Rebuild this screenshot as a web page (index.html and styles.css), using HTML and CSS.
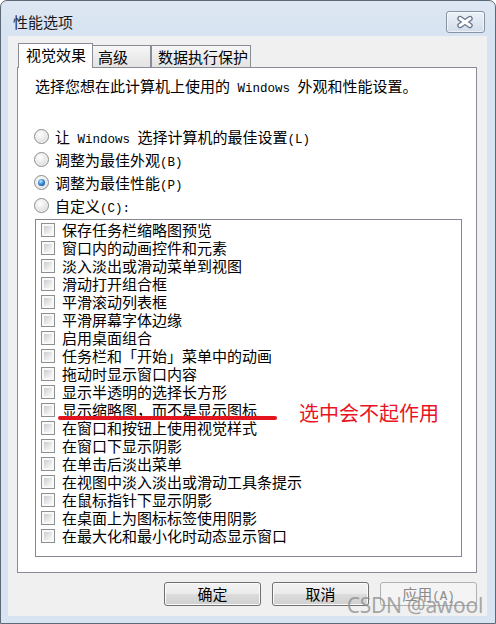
FILE: index.html
```html
<!DOCTYPE html>
<html lang="zh-CN">
<head>
<meta charset="utf-8">
<title>性能选项</title>
<link rel="stylesheet" href="styles.css">
</head>
<body>
<div class="window">
  <div class="titlebar">
    <div class="title">性能选项</div>
    <div class="close">
      <svg width="37" height="20" viewBox="0 0 37 20">
        <path d="M13 6.5 L23 13.5 M23 6.5 L13 13.5" stroke="#66738a" stroke-width="5.4" stroke-linecap="round" fill="none"/>
        <path d="M13 6.5 L23 13.5 M23 6.5 L13 13.5" stroke="#ffffff" stroke-width="3" stroke-linecap="round" fill="none"/>
      </svg>
    </div>
  </div>
  <div class="client">
    <div class="tabs">
      <div class="tab active">视觉效果</div>
      <div class="tab t2">高级</div>
      <div class="tab t3">数据执行保护</div>
    </div>
    <div class="panel">
      <p class="desc">选择您想在此计算机上使用的<span class="en"> Windows </span>外观和性能设置。</p>
      <div class="options">
        <div class="radio-row"><span class="radio"></span><span class="label">让<span class="en"> Windows </span>选择计算机的最佳设置<span class="en">(L)</span></span></div>
        <div class="radio-row"><span class="radio"></span><span class="label">调整为最佳外观<span class="en">(B)</span></span></div>
        <div class="radio-row"><span class="radio checked"></span><span class="label">调整为最佳性能<span class="en">(P)</span></span></div>
        <div class="radio-row"><span class="radio"></span><span class="label">自定义<span class="en">(C):</span></span></div>
      </div>
      <div class="listbox">
        <div class="item"><span class="check"></span><span>保存任务栏缩略图预览</span></div>
        <div class="item"><span class="check"></span><span>窗口内的动画控件和元素</span></div>
        <div class="item"><span class="check"></span><span>淡入淡出或滑动菜单到视图</span></div>
        <div class="item"><span class="check"></span><span>滑动打开组合框</span></div>
        <div class="item"><span class="check"></span><span>平滑滚动列表框</span></div>
        <div class="item"><span class="check"></span><span>平滑屏幕字体边缘</span></div>
        <div class="item"><span class="check"></span><span>启用桌面组合</span></div>
        <div class="item"><span class="check"></span><span>任务栏和「开始」菜单中的动画</span></div>
        <div class="item"><span class="check"></span><span>拖动时显示窗口内容</span></div>
        <div class="item"><span class="check"></span><span>显示半透明的选择长方形</span></div>
        <div class="item"><span class="check"></span><span>显示缩略图，而不是显示图标</span></div>
        <div class="item"><span class="check"></span><span>在窗口和按钮上使用视觉样式</span></div>
        <div class="item"><span class="check"></span><span>在窗口下显示阴影</span></div>
        <div class="item"><span class="check"></span><span>在单击后淡出菜单</span></div>
        <div class="item"><span class="check"></span><span>在视图中淡入淡出或滑动工具条提示</span></div>
        <div class="item"><span class="check"></span><span>在鼠标指针下显示阴影</span></div>
        <div class="item"><span class="check"></span><span>在桌面上为图标标签使用阴影</span></div>
        <div class="item"><span class="check"></span><span>在最大化和最小化时动态显示窗口</span></div>
      </div>
    </div>
    <div class="actions">
      <div class="btn">确定</div>
      <div class="btn">取消</div>
      <div class="btn disabled">应用<span class="en">(A)</span></div>
    </div>
  </div>
  <div class="annot-line"></div>
  <div class="annot-text">选中会不起作用</div>
  <div class="watermark">CSDN @awool</div>
</div>
</body>
</html>
```

FILE: styles.css
```css
html, body {
  margin: 0;
  padding: 0;
  background: #ffffff;
}
body {
  width: 496px;
  height: 624px;
  overflow: hidden;
  font-family: "Noto Sans CJK SC", sans-serif;
  color: #000;
}
.window {
  position: relative;
  box-sizing: border-box;
  width: 496px;
  height: 624px;
  border: 1px solid #5e6977;
  border-radius: 7px 7px 0 0;
  background: linear-gradient(#dde7f3, #d7e3f1 36px, #d8e4f2);
  padding: 0 8px 7px 7px;
  display: flex;
  flex-direction: column;
}
.titlebar {
  height: 35px;
  flex: none;
  display: flex;
  justify-content: space-between;
  align-items: flex-start;
}
.title {
  margin: 12px 0 0 5px;
  font-size: 15px;
  line-height: 18px;
  color: #1a1a1a;
}
.close {
  box-sizing: border-box;
  width: 39px;
  height: 22px;
  margin: 10px 2px 0 0;
  border: 1px solid #8792a3;
  border-radius: 3px;
  background: linear-gradient(#edf2f8, #dfe7f1 50%, #d3ddea);
  box-shadow: inset 0 0 0 1px rgba(255,255,255,0.6);
}
.close svg {
  display: block;
}
.client {
  flex: 1;
  background: #f0f0f0;
  padding: 7px 10px 10px 9px;
  display: flex;
  flex-direction: column;
}
.tabs {
  position: relative;
  z-index: 1;
  display: flex;
  align-items: flex-end;
  height: 25px;
  margin-bottom: -1px;
  padding-left: 1px;
}
.tab {
  box-sizing: border-box;
  height: 23px;
  border: 1px solid #898c95;
  background: linear-gradient(#f7f7f7, #ececec 50%, #e3e3e3);
  font-size: 15px;
  line-height: 21px;
  padding: 0 0 0 6px;
  white-space: nowrap;
}
.tab.active {
  width: 75px;
  height: 25px;
  padding-left: 7px;
  background: #ffffff;
  border-bottom: none;
  line-height: 22px;
}
.tab.t2 {
  width: 58px;
  border-left: none;
  padding-left: 5px;
}
.tab.t3 {
  width: 100px;
}
.panel {
  box-sizing: border-box;
  height: 506px;
  border: 1px solid #898c95;
  background: #ffffff;
  padding: 9px 15px 0 16px;
}
.desc {
  height: 18px;
  margin: 0 0 0 1px;
  font-size: 15px;
  line-height: 18px;
  white-space: nowrap;
}
.en {
  font-family: "Liberation Mono", monospace;
  font-size: 12.5px;
  line-height: 1;
  white-space: pre;
}
.options {
  margin-top: 30px;
}
.radio-row {
  display: flex;
  align-items: center;
  gap: 6px;
  height: 23px;
  font-size: 15px;
  line-height: 18px;
  white-space: nowrap;
}
.label {
  height: 18px;
}
.radio {
  position: relative;
  box-sizing: border-box;
  width: 15px;
  height: 15px;
  flex: none;
  border-radius: 50%;
  border: 1px solid #8b8b8b;
  background: radial-gradient(circle at 40% 35%, #ffffff, #e6e6e6 55%, #cdcdcd);
  box-shadow: inset 0 0 0 1px #f4f4f4;
}
.radio.checked::after {
  content: "";
  position: absolute;
  left: 3px;
  top: 3px;
  width: 7px;
  height: 7px;
  border-radius: 50%;
  background: radial-gradient(circle at 40% 35%, #c6ecff, #3b8ad6 45%, #0c3874);
}
.listbox {
  box-sizing: border-box;
  width: 427px;
  height: 338px;
  margin: 2px 0 0 1px;
  border: 1px solid #828790;
  padding: 1px 0 0 5px;
}
.item {
  display: flex;
  align-items: center;
  gap: 7px;
  height: 18px;
  font-size: 15px;
  line-height: 18px;
  white-space: nowrap;
}
.check {
  box-sizing: border-box;
  width: 14px;
  height: 14px;
  flex: none;
  border: 1px solid #8e8f8f;
  padding: 2px;
  background: linear-gradient(135deg, #c9cdd2, #eeeeee 70%, #f7f7f7) content-box, #f9f9f9;
}
.actions {
  display: flex;
  justify-content: flex-end;
  gap: 11px;
  margin-top: 9px;
}
.btn {
  box-sizing: border-box;
  width: 97px;
  height: 24px;
  border: 1px solid #707070;
  border-radius: 3px;
  background: linear-gradient(#f2f2f2, #ebebeb 50%, #dddddd 50%, #cfcfcf);
  box-shadow: inset 0 0 0 1px #fbfbfb;
  font-size: 15px;
  line-height: 21px;
  text-align: center;
}
.btn.disabled {
  border-color: #adb2b5;
  background: #f4f4f4;
  box-shadow: none;
  color: #8a8a8a;
}
.annot-line {
  position: absolute;
  left: 57px;
  top: 415px;
  width: 219px;
  height: 4px;
  border-radius: 2px;
  background: #e3141e;
}
.annot-text {
  position: absolute;
  left: 298px;
  top: 400px;
  font-size: 20px;
  line-height: 24px;
  color: #e8141f;
  white-space: nowrap;
}
.watermark {
  position: absolute;
  right: 12px;
  top: 592px;
  font-family: "Noto Sans", sans-serif;
  font-size: 21px;
  line-height: 24px;
  letter-spacing: -0.3px;
  color: rgba(140, 140, 140, 0.75);
  white-space: nowrap;
}
```
